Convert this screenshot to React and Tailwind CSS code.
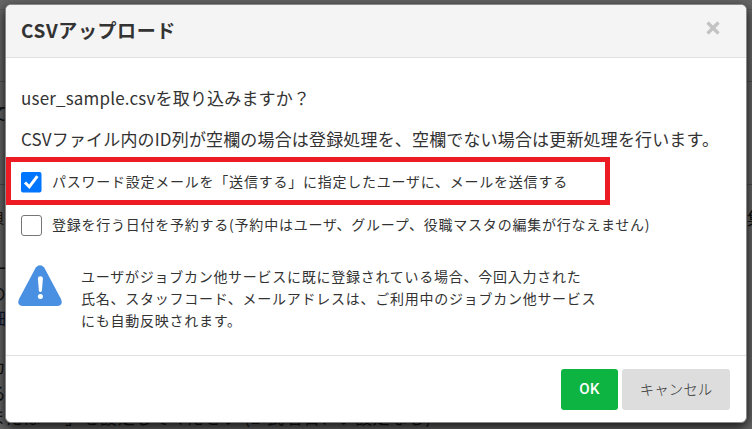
import { useState } from "react";

const backdropTexts = [
  { text: "て", className: "left-[-9px] top-[101px]" },
  { text: "負", className: "left-[-12px] top-[204px] text-[#24160c]" },
  { text: "集", className: "left-[747px] top-[206px]" },
  { text: "ー", className: "left-[-10px] top-[256px]" },
  { text: "の", className: "left-[-11px] top-[281px]" },
  { text: "細", className: "left-[-11px] top-[306px] text-[#0c1433]" },
  { text: "カ", className: "left-[-11px] top-[355px]" },
  { text: "る", className: "left-[-11px] top-[381px]" },
  { text: "または「-」を設定してください (2-氏名石、い設定なし)", className: "left-[-12px] top-[405px] tracking-[0.6px]" },
];

const WarningIcon = () => (
  <svg viewBox="0 0 44 42" className="w-11 h-[42px] shrink-0">
    <path
      d="M17.8 2.600 Q22 -2.2 26.2 2.600 L43 34 Q45.500 41 39 41 H5 Q-1.500 41 1 34 Z"
      fill="#4a90e2"
    />
    <path d="M19.900 13.500 Q19.900 11.300 22.400 11.300 Q24.900 11.300 24.900 13.500 L23.900 26 Q22.400 28.200 20.900 26 Z" fill="#fff" />
    <circle cx="22.400" cy="31.600" r="2.500" fill="#fff" />
  </svg>
);

const CheckRow = ({ checked, onChange, textClass, children }) => (
  <label className="flex items-center text-[14px] leading-5">
    <input type="checkbox" className="sr-only" checked={checked} onChange={onChange} />
    {checked ? (
      <svg viewBox="0 0 21 21" className="w-[21px] h-[21px] shrink-0 mt-[3px]">
        <rect x="0" y="0" width="20.500" height="20.500" rx="2" fill="#0075ff" />
        <path d="M4 10.500 L8.300 14.800 L16.400 4.200" fill="none" stroke="#fff" strokeWidth="3" />
      </svg>
    ) : (
      <span className="w-[21px] h-[21px] shrink-0 rounded-[3px] border border-[#767676] bg-white" />
    )}
    <span className={`ml-[10px] whitespace-nowrap tracking-[0.76px] ${textClass}`}>{children}</span>
  </label>
);

const App = () => {
  const [sendMail, setSendMail] = useState(true);
  const [reserve, setReserve] = useState(false);

  return (
    <div
      className="relative w-[752px] h-[429px] overflow-hidden bg-[#666] px-[5px] pt-1 text-[#333] font-['Noto_Sans_CJK_JP','Noto_Sans_CJK_SC',sans-serif]"
    >
      <div className="absolute inset-0 text-[17px] leading-6 text-[#111] whitespace-nowrap">
        <div className="absolute top-[9px] w-full border-t border-[#5a5a5a]" />
        <div className="absolute top-[81px] w-full border-t border-[#4d4d4d]" />
        <div className="absolute top-[184px] w-full border-t border-[#4d4d4d]" />
        {backdropTexts.map((item) => (
          <span key={item.text} className={`absolute ${item.className}`}>
            {item.text}
          </span>
        ))}
      </div>

      <div className="relative flex flex-col w-[742px] h-[419px] rounded-md border border-[#888] bg-white shadow-[0_4px_12px_rgba(0,0,0,0.85)]">
        <div className="flex items-center justify-between h-[53px] shrink-0 rounded-t-[5px] border-b border-[#e0e0e0] bg-[#f4f4f4] pl-[15px] pr-[26px]">
          <h4 className="mb-[2px] text-[19px] font-bold leading-7 tracking-[0.6px]">CSVアップロード</h4>
          <button type="button" className="w-[14px] h-[14px] mb-[7px]">
            <svg viewBox="0 0 14 14" className="w-full h-full">
              <path d="M1.500 1.500 L12.500 12.500 M12.500 1.500 L1.500 12.500" stroke="#c3c3c3" strokeWidth="3.400" />
            </svg>
          </button>
        </div>

        <div className="flex flex-col h-[298px] shrink-0 border-b border-[#e0e0e0]">
          <p className="mt-7 pl-[15px] text-[17px] leading-6 tracking-[0.18px]">user_sample.csvを取り込みますか？</p>
          <p className="mt-[17px] pl-[15px] text-[17px] leading-6 tracking-[0.16px] whitespace-nowrap">
            CSVファイル内のID列が空欄の場合は登録処理を、空欄でない場合は更新処理を行います。
          </p>
          <div className="flex items-center w-[604px] h-12 mt-[6px] border-5 border-[#ed1c24] pl-[10px]">
            <CheckRow checked={sendMail} onChange={() => setSendMail(!sendMail)} textClass="">
              パスワード設定メールを「送信する」に指定したユーザに、メールを送信する
            </CheckRow>
          </div>
          <div className="mt-[10px] pl-[15px]">
            <CheckRow checked={reserve} onChange={() => setReserve(!reserve)} textClass="-mt-1">
              登録を行う日付を予約する(予約中はユーザ、グループ、役職マスタの編集が行なえません)
            </CheckRow>
          </div>
          <div className="flex mt-[29px] pl-3">
            <WarningIcon />
            <p className="ml-[19px] text-[14px] leading-[22px] tracking-[0.74px] whitespace-nowrap">
              ユーザがジョブカン他サービスに既に登録されている場合、今回入力された
              <br />
              氏名、スタッフコード、メールアドレスは、ご利用中のジョブカン他サービス
              <br />
              にも自動反映されます。
            </p>
          </div>
        </div>

        <div className="flex justify-end gap-1 pt-[13px] pr-4">
          <button type="button" className="w-[57px] h-[41px] rounded-[3px] bg-[#0eb441] text-[15px] text-white font-medium tracking-[0.3px] font-['Roboto','Liberation_Sans',sans-serif]">
            OK
          </button>
          <button type="button" className="w-[108px] h-[41px] pb-px rounded-[3px] bg-[#ddd] text-[14.5px] font-light">
            キャンセル
          </button>
        </div>
      </div>
    </div>
  );
};

export default App;
